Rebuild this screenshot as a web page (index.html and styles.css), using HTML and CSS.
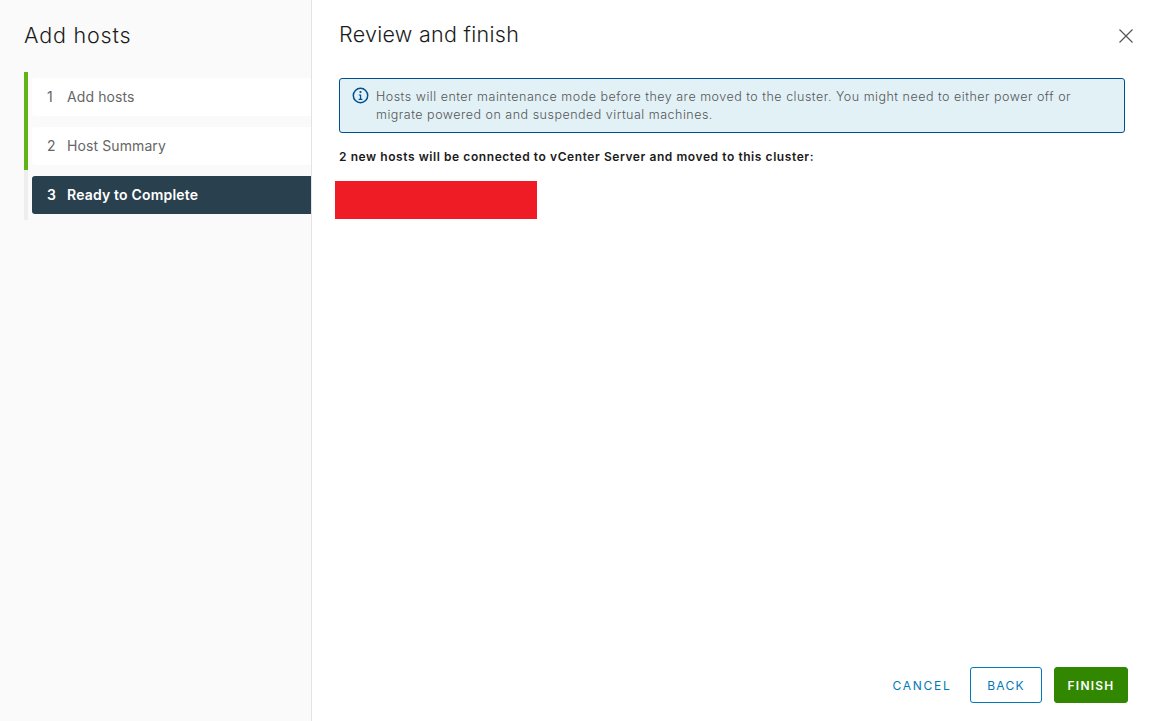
FILE: index.html
```html
<!DOCTYPE html>
<html lang="en">
<head>
<meta charset="utf-8">
<title>Add hosts</title>
<link rel="stylesheet" href="styles.css">
</head>
<body>
<div class="wizard">
  <aside class="side">
    <h2 class="side-title">Add hosts</h2>
    <ol class="steps">
      <li class="step done"><div class="step-box"><span class="num">1</span><span>Add hosts</span></div></li>
      <li class="step done"><div class="step-box"><span class="num">2</span><span>Host Summary</span></div></li>
      <li class="step current"><div class="step-box"><span class="num">3</span><span>Ready to Complete</span></div></li>
    </ol>
  </aside>
  <main class="main">
    <header class="head">
      <h3 class="title">Review and finish</h3>
      <button class="close" aria-label="Close">
        <svg width="16" height="16" viewBox="0 0 16 16"><path d="M1.5 1.5 14.5 14.5M14.5 1.5 1.5 14.5" stroke="#565656" stroke-width="1.2" fill="none"/></svg>
      </button>
    </header>
    <div class="alert">
      <svg class="alert-icon" width="17" height="17" viewBox="0 0 17 17"><circle cx="8.5" cy="8.5" r="7.2" fill="none" stroke="#00508f" stroke-width="1.5"/><circle cx="8.5" cy="5" r="1.1" fill="#00508f"/><path d="M6.8 7.4h2.4v4.4h1.2v1.1H6.6v-1.1h1.3V8.5H6.8z" fill="#00508f"/></svg>
      <p class="alert-text">Hosts will enter maintenance mode before they are moved to the cluster. You might need to either power off or migrate powered on and suspended virtual machines.</p>
    </div>
    <p class="summary">2 new hosts will be connected to vCenter Server and moved to this cluster:</p>
    <div class="redacted"></div>
    <footer class="foot">
      <button class="btn link">CANCEL</button>
      <button class="btn outline">BACK</button>
      <button class="btn primary">FINISH</button>
    </footer>
  </main>
</div>
</body>
</html>
```
FILE: styles.css
```css
* { box-sizing: border-box; }
html, body { margin: 0; height: 100%; background: #fff; }
body { font-family: Inter, "Noto Sans", sans-serif; color: #565656; overflow: hidden; }
.wizard { display: flex; height: 721px; }
.side { width: 312px; flex: none; background: #fafafa; border-right: 1px solid #e3e3e3; padding: 22px 0 0 24px; }
.side-title { margin: 0; font-size: 21.5px; line-height: 26px; font-weight: 300; color: #1b1b1b; letter-spacing: 0.8px; }
.steps { list-style: none; margin: 24px 0 0; padding: 0; width: 287px; }
.step { border-left: 4px solid #eee; padding: 6px 0 5px 4px; }
.step.done { border-left-color: #60b515; }
.step.current { padding-bottom: 6px; }
.step-box { height: 38px; display: flex; align-items: center; background: #fff; border-radius: 3px 0 0 3px; padding: 0 0 2px 15px; font-size: 14px; letter-spacing: 0.1px; color: #666; }
.num { width: 20px; }
.current .step-box { background: #29414e; color: #fff; font-weight: 600; letter-spacing: 0.18px; }
.main { flex: 1; position: relative; padding: 21px 26px 0 27px; }
.head { display: flex; justify-content: space-between; align-items: center; height: 26px; }
.title { margin: 0; font-size: 21.5px; line-height: 26px; font-weight: 300; color: #1b1b1b; letter-spacing: 0.28px; }
.close { border: 0; background: none; padding: 0; width: 16px; height: 16px; margin: 4px -9px 0 0; display: block; }
.close svg { display: block; }
.alert { margin: 31px 0 0; height: 55px; background: #e1f1f6; border: 1px solid #00508f; border-radius: 3px; display: flex; padding: 8px 12px; gap: 7px; }
.alert-icon { flex: none; }
.alert-text { margin: 0; padding-top: 1px; font-size: 12.5px; line-height: 18px; letter-spacing: 0.5px; color: #565656; font-weight: 300; }
.summary { margin: 16px 0 0; font-size: 12px; line-height: 16px; font-weight: 600; letter-spacing: 0.57px; color: #1b1b1b; }
.redacted { width: 202px; height: 38px; margin: 16px 0 0 -4px; background: #ef1c25; }
.foot { position: absolute; right: 23px; top: 667px; display: flex; align-items: center; gap: 12px; }
.btn { height: 36px; border-radius: 3px; font-family: inherit; font-size: 12px; letter-spacing: 1.3px; padding: 0; background: none; border: 1px solid transparent; font-weight: 400; }
.link { width: 72px; color: #0079b8; letter-spacing: 1.7px; }
.outline { width: 72px; color: #0079b8; border-color: #0079b8; }
.primary { width: 74px; background: #318700; color: #fff; font-weight: 600; letter-spacing: 1.2px; border-color: #318700; }
```
